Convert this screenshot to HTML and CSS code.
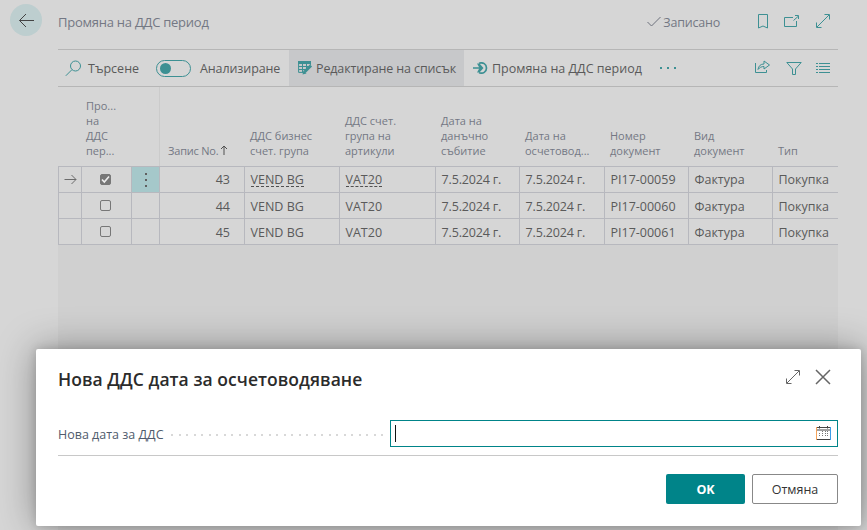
FILE: index.html
```html
<!DOCTYPE html>
<html lang="bg">
<head>
<meta charset="utf-8">
<title>Промяна на ДДС период</title>
<link rel="stylesheet" href="styles.css">
</head>
<body>
<div class="page">
  <header class="titlebar">
    <button class="back" aria-label="Назад"><svg width="32" height="32" viewBox="0 0 32 32"><path d="M24 16.5H9.5M16 10L9.5 16.5L16 23"/></svg></button>
    <h1>Промяна на ДДС период</h1>
    <div class="saved"><svg width="14" height="12" viewBox="0 0 14 12"><path d="M.5 6L4.5 10L13.500 1"/></svg><span>Записано</span></div>
    <div class="title-icons">
      <svg width="12" height="16" viewBox="0 0 12 16"><path d="M1.500 1.500H10.500V15L6 13L1.500 15Z"/></svg>
      <svg width="16" height="14" viewBox="0 0 16 14"><path d="M9 3.500H.5V12.500H12.500V7M9.500 6.500L14 2.500M11 1.500H14.500V5"/></svg>
      <svg width="16" height="16" viewBox="0 0 16 16"><path d="M2 14L14 2M9.500 1.500H14.500V6.500M1.500 9.500V14.500H6.500"/></svg>
    </div>
  </header>
  <main class="content">
    <nav class="toolbar">
      <div class="tool search"><svg width="17" height="17" viewBox="0 0 17 17"><circle cx="10.500" cy="6" r="5"/><path d="M7 9.600L.8 15.800"/></svg><span>Търсене</span></div>
      <div class="tool analyze"><i class="toggle"></i><span>Анализиране</span></div>
      <div class="tool edit"><svg width="15" height="14" viewBox="0 0 15 14"><path class="fill" d="M0 0H13V3H0Z"/><path d="M.6 2V11.400H5M.6 5.500H11M.6 8.500H8M4.500 3V11.500M8.500 3V8M12.400 2V4"/><path class="pencil" d="M6.500 11L13 4.500"/><path class="fill" d="M4.500 13.500L5.500 9.500L8.500 12.500Z"/></svg><span>Редактиране на списък</span></div>
      <div class="tool change"><svg width="15" height="12" viewBox="0 0 15 12"><path class="thick" d="M0 6H7M6 1.200C10 0 13.500 2 13.500 6S10 12 6 10.800"/><path class="fill" d="M4 1.500H6.500L10.500 6L6.500 10.500H4L6.500 6Z"/></svg><span>Промяна на ДДС период</span></div>
      <div class="dots"><i></i><i></i><i></i></div>
      <div class="view-icons">
        <svg width="16" height="14" viewBox="0 0 16 14"><path d="M.5 3V12.500H11.500V10M3 9.500C3.500 6 5.500 4 9 4V1L14.500 5L9 9V6.500C6.500 6.500 4.500 7.500 3 9.500Z"/></svg>
        <svg width="16" height="15" viewBox="0 0 16 15"><path d="M.8 1.500H15.200L9.500 8V13.500H6.500V8Z"/></svg>
        <svg width="14" height="12" viewBox="0 0 14 12"><path d="M0 1.500H2M3 1.500H14M0 4.500H2M3 4.500H14M0 7.500H2M3 7.500H14M0 10.500H2M3 10.500H14"/></svg>
      </div>
    </nav>
    <section class="grid head">
      <div></div><div class="center-head">Про...<br>на<br>ДДС<br>пер...</div><div></div>
      <div class="frozen">Запис No.<svg width="8" height="10" viewBox="0 0 8 10"><path d="M4 10V1M1 4L4 1L7 4"/></svg></div>
      <div>ДДС бизнес<br>счет. група</div><div>ДДС счет.<br>група на<br>артикули</div><div>Дата на<br>данъчно<br>събитие</div><div>Дата на<br>осчетовод...</div><div>Номер<br>документ</div><div>Вид<br>документ</div><div>Тип</div>
    </section>
    <section class="grid row">
      <div class="mark"><svg width="13" height="11" viewBox="0 0 13 11"><path d="M.5 5.500H12M7.500 1L12 5.500L7.500 10"/></svg></div>
      <div class="check"><i class="box on"><svg width="11" height="11" viewBox="0 0 11 11"><path d="M2 5.500L4.300 8L9 2.500"/></svg></i></div>
      <div class="menu"><i></i><i></i><i></i></div>
      <div class="num">43</div><div><span class="link">VEND BG</span></div><div><span class="link">VAT20</span></div><div class="date">7.5.2024 г.</div><div class="date">7.5.2024 г.</div><div class="doc">PI17-00059</div><div>Фактура</div><div>Покупка</div>
    </section>
    <section class="grid row lower">
      <div></div><div class="check"><i class="box"></i></div><div></div>
      <div class="num">44</div><div>VEND BG</div><div>VAT20</div><div class="date">7.5.2024 г.</div><div class="date">7.5.2024 г.</div><div class="doc">PI17-00060</div><div>Фактура</div><div>Покупка</div>
    </section>
    <section class="grid row lower">
      <div></div><div class="check"><i class="box"></i></div><div></div>
      <div class="num">45</div><div>VEND BG</div><div>VAT20</div><div class="date">7.5.2024 г.</div><div class="date">7.5.2024 г.</div><div class="doc">PI17-00061</div><div>Фактура</div><div>Покупка</div>
    </section>
    <div class="rest"></div>
  </main>
</div>
<div class="dialog" role="dialog">
  <div class="dialog-head">
    <h2>Нова ДДС дата за осчетоводяване</h2>
    <svg width="16" height="16" viewBox="0 0 16 16"><path d="M2 14L14 2M9.500 1.500H14.500V6.500M1.500 9.500V14.500H6.500"/></svg>
    <svg class="close" width="16" height="16" viewBox="0 0 16 16"><path d="M1 1L15 15M15 1L1 15"/></svg>
  </div>
  <div class="field">
    <label>Нова дата за ДДС</label>
    <div class="leader"></div>
    <div class="input"><i class="caret"></i><svg width="15" height="14" viewBox="0 0 15 14"><path class="dark" d="M1 1.500H14M1 4H14M1 13.500H14M3.500 0V2.500M11.500 0V2.500"/><path class="orange" d="M.5 1V14"/><path class="blue" d="M14.500 1V14"/><path class="days" d="M3.500 7V11M6.500 5V11M9.500 5V11M11.500 5V11"/></svg></div>
  </div>
  <div class="actions"><button class="ok">OK</button><button class="cancel">Отмяна</button></div>
</div>
</body>
</html>
```
FILE: styles.css
```css
* { box-sizing: border-box; }
body { margin: 0; width: 867px; height: 530px; overflow: hidden; background: #d6d6d6; font-family: "Open Sans", "Noto Sans", sans-serif; font-size: 12.5px; color: #5a5a5a; }
svg { display: block; flex: none; fill: none; stroke: #3d9093; stroke-width: 1; }
h1, h2 { margin: 0; font-weight: 400; white-space: nowrap; }
button { font-family: inherit; padding: 0; }
.page { height: 530px; display: flex; flex-direction: column; }
.titlebar { height: 49px; display: flex; align-items: flex-start; padding: 4px 36px 0 10px; color: #747884; }
.back { width: 32px; height: 32px; border: 0; border-radius: 50%; background: #bdcecf; }
.back svg { stroke: #444; }
.titlebar h1 { margin-left: 16px; font-size: 13px; line-height: 36px; letter-spacing: -.25px; }
.saved { margin-left: auto; display: flex; align-items: center; gap: 2px; line-height: 38px; letter-spacing: -.2px; }
.saved svg { stroke: #6c707c; margin-top: -2px; }
.title-icons { display: flex; align-items: center; height: 34px; margin-left: 37px; gap: 15px; }
.content { margin: 0 29px 0 58px; flex: 1; display: flex; flex-direction: column; }
.toolbar { height: 38px; border-top: 1px solid #b6b6b6; border-bottom: 1px solid #b6b6b6; display: flex; align-items: stretch; white-space: nowrap; }
.tool { display: flex; align-items: center; }
.tool span { margin-top: 1px; }
.search { width: 98px; padding-left: 7px; gap: 6px; }
.analyze { width: 133px; gap: 9px; letter-spacing: -.1px; }
.toggle { width: 35px; height: 17px; border: 1px solid #3d9093; border-radius: 9px; padding: 2px 3px; }
.toggle::before { content: ""; display: block; width: 11px; height: 11px; border-radius: 50%; background: #3d9093; }
.edit { width: 175px; padding-left: 9px; gap: 3px; background: #c7c8ca; letter-spacing: -.12px; }
.tool .fill { fill: #3d9093; stroke: none; }
.thick { stroke-width: 1.700; }
.pencil { stroke-width: 3; }
.change { padding-left: 9px; gap: 4px; width: 196px; }
.dots { display: flex; align-items: center; gap: 5px; }
.dots i { width: 2px; height: 2px; background: #3d9093; }
.view-icons { margin-left: auto; display: flex; align-items: center; gap: 14px; padding-right: 8px; }
.view-icons svg:first-child { margin-right: 1px; margin-top: -2px; }
.grid { display: grid; grid-template-columns: 23px 50px 28px 85px 95px 96px 84px 85px 84px 84px 66px; white-space: nowrap; }
.head { height: 79px; align-items: end; font-size: 11px; line-height: 15px; color: #747884; }
.head > div { padding: 0 0 8px 6px; }
.head .center-head { padding-left: 5px; }
.head .frozen { align-self: stretch; border-left: 1px solid #cbcbcb; display: flex; align-items: flex-end; padding-left: 8px; gap: 2px; letter-spacing: -.2px; }
.frozen svg { stroke: #505050; margin-bottom: 3px; }
.row { height: 26px; border-top: 1px solid #b7b8be; line-height: 26px; }
.row > div { border-left: 1px solid #b7b8be; padding-left: 5.500px; height: 25px; }
.row.lower { line-height: 28px; }
.row > .date { letter-spacing: -.15px; }
.row .mark, .row .check, .row .menu { display: flex; padding: 0; align-items: center; justify-content: center; }
.mark svg { stroke: #6c6c6c; }
.box { width: 11px; height: 11px; border: 1px solid #777; border-radius: 2px; margin-right: 2px; }
.box.on { background: #777; }
.box svg { margin: -1px; stroke: #eee; stroke-width: 1.600; }
.row .menu { flex-direction: column; gap: 4px; background: #a5c8ca; }
.menu i { width: 2px; height: 2px; background: #606060; }
.row .num { text-align: right; padding-right: 14px; }
.link { display: inline-block; height: 20px; border-bottom: 1px dashed #505050; }
.rest { flex: 1; border-top: 1px solid #b7b8be; background: #d0d0d0; }
.dialog { position: absolute; left: 36px; top: 349px; width: 825px; height: 177px; padding: 0 23px 0 22px; background: #fff; border-radius: 2px; box-shadow: 0 0 38px rgba(0,0,0,.36), 0 0 10px rgba(0,0,0,.16); }
.dialog-head { display: flex; height: 71px; align-items: flex-start; padding: 20px 7px 0 0; }
.dialog-head h2 { margin-right: auto; font-weight: 600; font-size: 17.500px; line-height: 20px; letter-spacing: .05px; color: #2b2b2b; }
.dialog-head svg { stroke: #666; }
.dialog-head .close { margin-left: 14px; stroke-width: 1.500; }
.field { display: flex; align-items: center; height: 36px; padding-bottom: 9px; border-bottom: 1px solid #c8c8c8; color: #505c6d; }
.field label { line-height: 26px; padding-top: 3px; white-space: nowrap; width: 108px; }
.leader { flex: 1; height: 2px; margin: 3px 6px 0 5px; background: repeating-linear-gradient(90deg, #d8d8d8 0 2px, transparent 2px 7.500px); }
.input { width: 448px; height: 27px; border: 1px solid #008489; display: flex; align-items: center; justify-content: space-between; padding: 0 6px 0 4px; }
.caret { width: 1px; height: 17px; background: #111; }
.dark { stroke: #444; }
.orange { stroke: #f5a35a; }
.blue { stroke: #3c9ce8; }
.days { stroke: #777; stroke-dasharray: 1 1; }
.actions { display: flex; justify-content: flex-end; gap: 7px; padding-top: 18px; }
.actions button { height: 30px; border-radius: 2px; font-size: 12.500px; }
.ok { width: 79px; border: 0; background: #008489; color: #fff; font-weight: 700; }
.cancel { width: 86px; border: 1px solid #888; background: #fff; color: #333; }
```
